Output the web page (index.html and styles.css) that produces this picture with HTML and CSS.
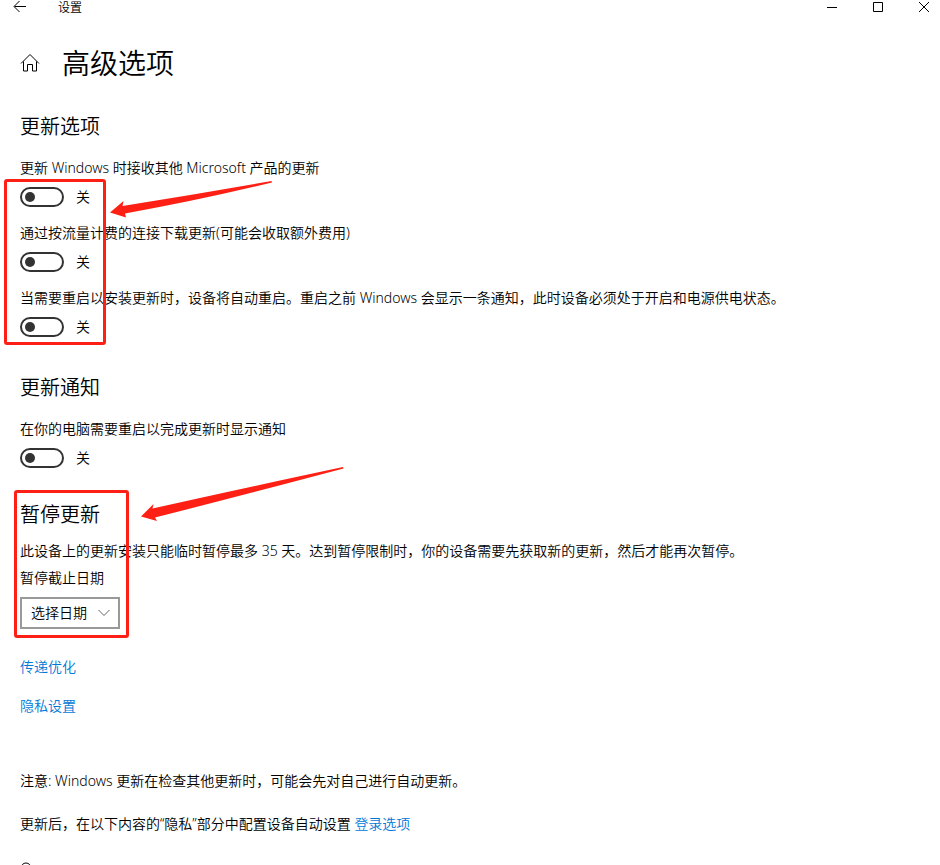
FILE: index.html
```
<!DOCTYPE html>
<html lang="zh-CN">

<head>
  <meta charset="UTF-8">
  <meta name="viewport" content="width=device-width, initial-scale=1.0">
  <title>设置</title>
  <link rel="stylesheet" href="styles.css">
</head>

<body>
  <header class="titlebar">
    <button class="back-btn" aria-label="返回">
      <svg width="14" height="14" viewBox="0 0 14 14"><path d="M13 6.500H1.500M6.500 1L1 6.500l5.500 5.500" /></svg>
    </button>
    <span class="app-name">设置</span>
    <div class="window-controls">
      <button aria-label="最小化">
        <svg width="12" height="12" viewBox="0 0 12 12"><path d="M1 6.500h10" /></svg>
      </button>
      <button aria-label="最大化">
        <svg width="12" height="12" viewBox="0 0 12 12"><path d="M1.500 1.500h9v9h-9z" /></svg>
      </button>
      <button aria-label="关闭">
        <svg width="12" height="12" viewBox="0 0 12 12"><path d="M1 1l10 10M11 1L1 11" /></svg>
      </button>
    </div>
  </header>

  <main>
    <div class="page-title">
      <svg class="home-icon" width="20" height="20" viewBox="0 0 20 20"><path d="M1 10.500L10 1.500l9 9M3.500 8.500v9.500h4v-6.500h5v6.500h4V8.500" /></svg>
      <h1>高级选项</h1>
    </div>

    <section class="options">
      <h2>更新选项</h2>
      <div class="settings">
        <div class="setting">
          <label for="ms-products">更新 Windows 时接收其他 Microsoft 产品的更新</label>
          <div class="switch"><input type="checkbox" id="ms-products"><span>关</span></div>
        </div>
        <div class="setting">
          <label for="metered">通过按流量计费的连接下载更新(可能会收取额外费用)</label>
          <div class="switch"><input type="checkbox" id="metered"><span>关</span></div>
        </div>
        <div class="setting">
          <label for="auto-restart">当需要重启以安装更新时，设备将自动重启。重启之前 Windows 会显示一条通知，此时设备必须处于开启和电源供电状态。</label>
          <div class="switch"><input type="checkbox" id="auto-restart"><span>关</span></div>
        </div>
        <div class="mark mark-switches"></div>
        <svg class="arrow arrow-switches" width="166" height="40" viewBox="0 0 166 40"><path d="M2 33.500L15.500 22l-1 5Q90 15 163.500 2l.5 1.500Q92 21 17 34.500l1 4z" /></svg>
      </div>
    </section>

    <section class="notices">
      <h2>更新通知</h2>
      <div class="settings">
        <div class="setting">
          <label for="notify">在你的电脑需要重启以完成更新时显示通知</label>
          <div class="switch"><input type="checkbox" id="notify"><span>关</span></div>
        </div>
      </div>
    </section>

    <section class="pause">
      <h2>暂停更新</h2>
      <p>此设备上的更新安装只能临时暂停最多 35 天。达到暂停限制时，你的设备需要先获取新的更新，然后才能再次暂停。</p>
      <label for="pause-until">暂停截止日期</label>
      <div class="date-select">
        <select id="pause-until">
          <option>选择日期</option>
        </select>
        <svg width="12" height="8" viewBox="0 0 12 8"><path d="M.5 1L6 6.500 11.500 1" /></svg>
      </div>
      <div class="mark mark-pause"></div>
      <svg class="arrow arrow-pause" width="206" height="58" viewBox="0 0 206 58"><path d="M1 50.500L13.500 38l-1 4.500Q95 24 203 1l.5 1.500Q100 30 15 51.500l2 3.500z" /></svg>
    </section>

    <nav class="links">
      <a href="#">传递优化</a>
      <a href="#">隐私设置</a>
    </nav>

    <div class="notes">
      <p>注意: Windows 更新在检查其他更新时，可能会先对自己进行自动更新。</p>
      <p>更新后，在以下内容的“隐私”部分中配置设备自动设置 <a href="#">登录选项</a></p>
    </div>

    <svg class="help-icon" width="12" height="12" viewBox="0 0 12 12"><circle cx="6" cy="6" r="5" /></svg>
  </main>
</body>

</html>
```
FILE: styles.css
```
* {
  box-sizing: border-box;
}

body {
  height: 100vh;
  margin: 0;
  overflow: hidden;
  background: #fff;
  color: #000;
  font-family: "Noto Sans", "Noto Sans CJK SC", sans-serif;
  font-size: 14px;
  font-weight: 350;
  line-height: 20px;
}

h1,
h2,
p {
  margin: 0;
  font-weight: 350;
}

a {
  color: #0078d7;
  text-decoration: none;
}

svg {
  display: block;
  fill: none;
  stroke: #000;
}

button {
  display: flex;
  align-items: center;
  justify-content: center;
  height: 14px;
  padding: 0;
  border: none;
  background: transparent;
}

.titlebar {
  display: flex;
  align-items: flex-start;
  height: 16px;
}

.back-btn {
  width: 40px;
}

.app-name {
  margin-left: 18px;
  font-size: 12px;
  line-height: 16px;
}

.window-controls {
  display: flex;
  margin-left: auto;
  margin-right: -7px;
}

.window-controls button {
  width: 46px;
}

main {
  padding: 27px 20px 0;
}

.page-title {
  display: flex;
  align-items: center;
  gap: 22px;
  height: 40px;
}

h1 {
  font-size: 28px;
  line-height: 40px;
}

h2 {
  margin-bottom: 17px;
  font-size: 20px;
  line-height: 28px;
}

.options {
  margin-top: 30px;
}

.notices {
  margin-top: 37px;
}

.settings {
  position: relative;
  display: flex;
  flex-direction: column;
  gap: 16px;
}

.setting label {
  display: block;
  margin-bottom: 9px;
}

.switch {
  display: flex;
  align-items: center;
  gap: 12px;
}

.switch input {
  display: flex;
  align-items: center;
  appearance: none;
  width: 44px;
  height: 20px;
  margin: 0;
  padding: 0 3px;
  border: 2px solid #333;
  border-radius: 10px;
}

.switch input::before {
  content: "";
  width: 10px;
  height: 10px;
  border-radius: 50%;
  background: #333;
}

.switch input:checked {
  justify-content: flex-end;
}

.pause {
  position: relative;
  margin-top: 33px;
}

.pause h2 {
  margin-bottom: 12px;
}

.pause label {
  display: block;
  margin: 7px 0 9px;
}

.date-select {
  position: relative;
  width: 100px;
}

.date-select select {
  appearance: none;
  display: block;
  width: 100%;
  height: 32px;
  padding: 0 9px;
  border: 2px solid #999;
  border-radius: 0;
  background: #fff;
  color: #000;
  font: inherit;
}

.date-select svg {
  position: absolute;
  top: 12px;
  right: 10px;
  stroke: #666;
  pointer-events: none;
}

/* red callouts over the settings */
.mark {
  position: absolute;
  border: 3px solid #ff2015;
  border-radius: 3px;
  pointer-events: none;
}

.mark-switches {
  top: 21px;
  left: -16px;
  width: 102px;
  height: 166px;
}

.mark-pause {
  top: -11px;
  left: -6px;
  width: 115px;
  height: 148px;
}

.arrow {
  position: absolute;
  fill: #ff2015;
  stroke: none;
  pointer-events: none;
}

.arrow-switches {
  top: 21px;
  left: 88px;
}

.arrow-pause {
  top: -35px;
  left: 120px;
}

.links {
  display: flex;
  flex-direction: column;
  align-items: flex-start;
  gap: 19px;
  margin-top: 28px;
}

.notes {
  display: flex;
  flex-direction: column;
  gap: 23px;
  margin-top: 55px;
}

.help-icon {
  margin-top: 28px;
}
```
